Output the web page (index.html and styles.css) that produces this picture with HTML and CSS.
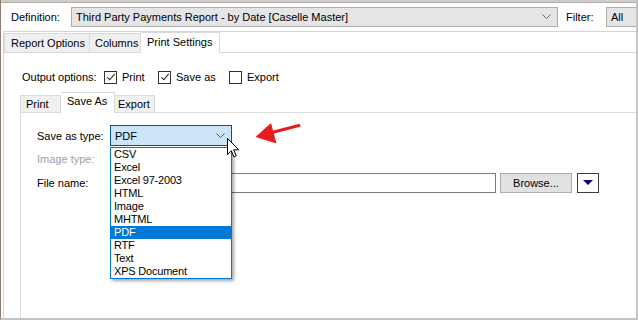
FILE: index.html
```html
<html lang="en">
  <head>
    <meta charset="UTF-8" />
    <title>Print settings</title>
    <link rel="stylesheet" href="styles.css">
  </head>
  <body>
    <div class="window">
      <div class="topbar"></div>

      <div class="def_row">
        <span class="def_label">Definition:</span>
        <div class="combo def_combo">
          <span>Third Party Payments Report - by Date [Caselle Master]</span>
          <svg class="chev" width="9" height="6" viewBox="0 0 9 6"><path d="M0.5 0.5 L4.5 4.5 L8.5 0.5" fill="none" stroke="#6a6a6a" stroke-width="1"/></svg>
        </div>
        <span class="filter_label">Filter:</span>
        <div class="combo filter_combo">All</div>
      </div>

      <div class="main">
        <div class="tabs main_tabs">
          <div class="tab t_report">Report Options</div>
          <div class="tab t_columns">Columns</div>
          <div class="tab active t_print">Print Settings</div>
        </div>

        <div class="main_body">
          <div class="output_row">
            <span class="out_label">Output options:</span>
            <label class="check c_print"><span class="box checked"></span>Print</label>
            <label class="check c_save"><span class="box checked"></span>Save as</label>
            <label class="check"><span class="box"></span>Export</label>
          </div>

          <div class="tabs sub_tabs">
            <div class="tab s_print">Print</div>
            <div class="tab active s_save">Save As</div>
            <div class="tab s_export">Export</div>
          </div>

          <div class="sub_panel">
            <div class="form_row row_type">
              <span class="f_label">Save as type:</span>
              <div class="type_select">
                <span>PDF</span>
                <svg class="chev" width="9" height="6" viewBox="0 0 9 6"><path d="M0.5 0.5 L4.5 4.5 L8.5 0.5" fill="none" stroke="#5a5a5a" stroke-width="1"/></svg>
              </div>
            </div>
            <div class="form_row row_image">
              <span class="f_label disabled">Image type:</span>
            </div>
            <div class="form_row row_file">
              <span class="f_label">File name:</span>
              <div class="file_input"></div>
              <button class="browse">Browse...</button>
              <button class="drop_btn">
                <svg width="10" height="6" viewBox="0 0 10 6"><path d="M0 0 L10 0 L5 5 Z" fill="#000080"/></svg>
              </button>
            </div>
          </div>
        </div>
      </div>

      <ul class="type_list">
        <li>CSV</li>
        <li>Excel</li>
        <li>Excel 97-2003</li>
        <li>HTML</li>
        <li>Image</li>
        <li>MHTML</li>
        <li class="selected">PDF</li>
        <li>RTF</li>
        <li>Text</li>
        <li>XPS Document</li>
      </ul>

      <svg class="red_arrow" width="52" height="32" viewBox="250 117 52 32">
        <line x1="299" y1="125.5" x2="268" y2="133.5" stroke="#e81c1c" stroke-width="3" stroke-linecap="round"/>
        <polygon points="255.5,137 271,123 276.5,143.5" fill="#e81c1c"/>
      </svg>

      <svg class="cursor" width="13" height="20" viewBox="0 0 13 20">
        <path d="M0.5 0.5 L0.5 16.5 L4.3 12.8 L7 18.8 L9.3 17.8 L6.7 11.8 L11.8 11.8 Z" fill="#fff" stroke="#000" stroke-width="1" stroke-linejoin="round"/>
      </svg>
    </div>
  </body>
</html>
```

FILE: styles.css
```css
* {
  padding: 0;
  margin: 0;
  box-sizing: border-box;
}

body {
  width: 638px;
  height: 320px;
  overflow: hidden;
  background: #fff;
  font-family: "Liberation Sans", Arial, sans-serif;
  font-size: 11px;
  color: #000;
  white-space: nowrap;
}

.window {
  position: relative;
  width: 638px;
  height: 320px;
  display: flex;
  flex-direction: column;
  border-left: 1px solid #8f7f74;
  border-right: 2px solid #c4c4c4;
  border-bottom: 2px solid #c4c4c4;
}

.topbar {
  height: 3px;
  background: #cdcdcd;
  border-bottom: 1px solid #b9aea6;
}

/* definition row */
.def_row {
  display: flex;
  align-items: center;
  height: 22px;
  margin-top: 3px;
  padding-left: 10px;
}
.def_label {
  width: 60px;
}
.combo {
  height: 20px;
  background: #e5e5e5;
  border: 1px solid #adadad;
  display: flex;
  align-items: center;
  padding-left: 4px;
}
.def_combo {
  width: 487px;
  justify-content: space-between;
  padding-right: 6px;
}
.filter_label {
  margin-left: 8px;
  width: 40px;
}
.filter_combo {
  flex: 1;
  border-right: none;
}

/* tabs */
.main {
  flex: 1;
  margin-top: 3px;
  margin-left: 2px;
  border-top: 1px solid #d4d4d4;
  border-left: 1px solid #d4d4d4;
  display: flex;
  flex-direction: column;
}
.tabs {
  display: flex;
  align-items: flex-end;
  border-bottom: 1px solid #d9d9d9;
}
.tab {
  background: #f0f0f0;
  border: 1px solid #d9d9d9;
  border-bottom: none;
  padding-left: 6px;
  display: flex;
  align-items: center;
}
.tab.active {
  background: #fff;
  margin-bottom: -1px;
  position: relative;
}
.main_tabs {
  height: 21px;
}
.main_tabs .tab {
  height: 19px;
}
.main_tabs .tab.active {
  height: 21px;
  padding-left: 6px;
  padding-bottom: 3px;
}
.t_report { width: 86px; }
.t_columns { width: 51px; border-left: none; padding-left: 5px; }
.t_print { width: 79px; border-left: none; }

.main_body {
  flex: 1;
  display: flex;
  flex-direction: column;
}

.output_row {
  display: flex;
  align-items: center;
  height: 14px;
  margin-top: 17px;
  padding-left: 18px;
}
.out_label {
  width: 82px;
}
.check {
  display: flex;
  align-items: center;
}
.c_print { width: 54px; }
.c_save { width: 71px; }
.box {
  width: 13px;
  height: 13px;
  border: 1px solid #333;
  margin-right: 5px;
  position: relative;
  background: #fff;
}
.box.checked::after {
  content: "";
  position: absolute;
  left: 3.5px;
  top: 0.5px;
  width: 3px;
  height: 7px;
  border-right: 1px solid #222;
  border-bottom: 1px solid #222;
  transform: rotate(40deg);
}

.sub_tabs {
  margin-top: 8px;
  margin-left: 16px;
  height: 21px;
}
.sub_tabs .tab {
  height: 17px;
  padding-left: 5px;
}
.sub_tabs .tab.active {
  height: 21px;
  padding-left: 6px;
  padding-bottom: 4px;
}
.s_print { width: 41px; }
.s_save { width: 54px; border-left: none; }
.s_export { width: 40px; border-left: none; padding-left: 3px !important; }

.sub_panel {
  flex: 1;
  margin-left: 16px;
  border-left: 1px solid #d9d9d9;
  padding: 12px 0 0 16px;
}
.form_row {
  display: flex;
  align-items: center;
}
.f_label {
  width: 73px;
}
.f_label.disabled {
  color: #a0a0a0;
}
.row_type {
  height: 21px;
}
.row_image {
  height: 20px;
  margin-top: 3px;
}
.row_file {
  height: 20px;
  margin-top: 4px;
}
.type_select {
  width: 122px;
  height: 21px;
  background: #cce4f7;
  border: 1px solid #005499;
  display: flex;
  align-items: center;
  justify-content: space-between;
  padding: 0 6px 0 4px;
}
.file_input {
  width: 386px;
  height: 20px;
  border: 1px solid #7a7a7a;
  background: #fff;
}
.browse {
  width: 72px;
  height: 20px;
  margin-left: 4px;
  background: #e1e1e1;
  border: 1px solid #adadad;
  font-family: inherit;
  font-size: 11px;
}
.drop_btn {
  width: 22px;
  height: 20px;
  margin-left: 5px;
  background: #fff;
  border: 1px solid #3c3c3c;
  display: flex;
  align-items: center;
  justify-content: center;
}

/* open list of the save as type select */
.type_list {
  position: absolute;
  left: 109px;
  top: 147px;
  width: 122px;
  list-style: none;
  background: #fff;
  border: 1px solid #0078d7;
  box-shadow: 2px 2px 3px rgba(0, 0, 0, 0.35);
  font-size: 11px;
  letter-spacing: -0.2px;
}
.type_list li {
  height: 13px;
  line-height: 13px;
  padding-left: 3px;
}
.type_list li.selected {
  background: #0078d7;
  color: #fff;
}

.red_arrow {
  position: absolute;
  left: 249px;
  top: 117px;
}
.cursor {
  position: absolute;
  left: 226px;
  top: 138px;
}
```
